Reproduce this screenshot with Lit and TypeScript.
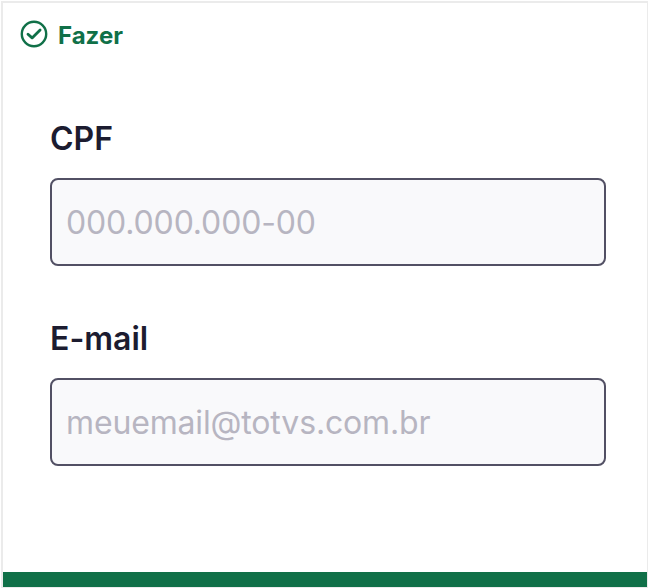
import { LitElement, html, css } from "lit";
import { customElement, property } from "lit/decorators.js";

@customElement("form-field")
class FormField extends LitElement {
  @property() label = "";
  @property() placeholder = "";
  @property() type = "text";

  static styles = css`
    :host { display: block; }
    .field { display: flex; flex-direction: column; gap: 19px; }
    .label { font: 600 32px/40px Inter, sans-serif; color: #1c1c30; }
    .input {
      box-sizing: border-box; width: 100%; height: 88px; margin: 0; padding: 0 14px;
      border: 2px solid #525064; border-radius: 8px; background: #f9f9fb;
      font: 400 32px/40px Inter, sans-serif; font-feature-settings: "calt" 0; letter-spacing: -0.15px; color: #1c1c30; outline: none;
    }
    .input::placeholder { color: #b7b5c1; opacity: 1; }
  `;

  render() {
    return html`<label class="field">
      <span class="label">${this.label}</span>
      <input class="input" type=${this.type} placeholder=${this.placeholder} />
    </label>`;
  }
}

@customElement("app-root")
class AppRoot extends LitElement {
  static styles = css`
    :host { display: block; box-sizing: border-box; height: 588px; padding: 1px 0 0 1px; background: #fff; font-family: Inter, sans-serif; }
    .card {
      box-sizing: border-box; height: 587px; display: flex; flex-direction: column;
      border: solid #ebebeb; border-width: 2px 1px 1px 2px;
    }
    .heading { display: flex; align-items: center; gap: 10px; height: 40px; padding: 11px 0 0 17px; color: #107048; }
    .icon { display: block; width: 28px; height: 28px; }
    .title { font-size: 24px; line-height: 30px; font-weight: 700; padding-top: 3px; }
    .form { flex: 1; display: flex; flex-direction: column; gap: 53px; padding: 65px 41px 0 47px; }
    .bar { height: 15px; background: #107048; }
  `;

  render() {
    return html`<section class="card">
      <header class="heading">
        <svg class="icon" viewBox="0 0 28 28" fill="none" stroke="currentColor" stroke-width="2.4" stroke-linecap="round" stroke-linejoin="round">
          <circle cx="14" cy="14" r="12.2" />
          <path stroke-width="2.8" d="M8 14.2l4.1 3.7 8-7.9" />
        </svg>
        <span class="title">Fazer</span>
      </header>
      <form class="form">
        <form-field label="CPF" placeholder="000.000.000-00"></form-field>
        <form-field label="E-mail" type="email" placeholder="meuemail@totvs.com.br"></form-field>
      </form>
      <div class="bar"></div>
    </section>`;
  }
}
